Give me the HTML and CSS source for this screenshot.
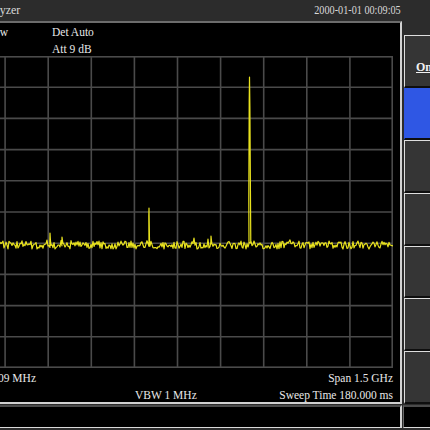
FILE: index.html
```html
<!DOCTYPE html>
<html lang="en">
<head>
  <meta charset="UTF-8">
  <meta name="viewport" content="width=device-width, initial-scale=1.0">
  <title>Spectrum Analyzer</title>
  <link rel="stylesheet" href="styles.css">
</head>
<body>
  <div class="app">
    <!-- left: title bar, screen, status line -->
    <div class="main-col">
      <div class="header">
        <span class="title">Spectrum Analyzer</span>
        <span class="clock">2000-01-01 00:09:05</span>
      </div>

      <div class="display">
        <div class="info">
          <span class="info-left">Input Low</span>
          <span>Det Auto</span>
          <span></span>
          <span>Att 9 dB</span>
        </div>

        <svg class="graticule" viewBox="0 0 431 312" width="431" height="312">
          <g id="grid"></g>
          <polyline id="trace" points=""></polyline>
        </svg>

        <div class="footer">
          <span class="center-freq">Center 750.0009 MHz</span>
          <span class="span-label">Span 1.5 GHz</span>
          <span class="vbw">VBW 1 MHz</span>
          <span class="sweep">Sweep Time 180.000 ms</span>
        </div>
      </div>

      <div class="status-bar"></div>
    </div>

    <!-- right: softkey menu -->
    <div class="softkeys">
      <div class="softkey"><span class="key-label">On/Off</span></div>
      <div class="softkey active"></div>
      <div class="softkey"></div>
      <div class="softkey"></div>
      <div class="softkey"></div>
      <div class="softkey"></div>
      <div class="softkey"></div>
      <div class="status-box"></div>
    </div>
  </div>

  <script src="script.js"></script>
</body>
</html>
```

FILE: styles.css
```css
:root {
  --panel: #2c2c2c;
  --key: #353535;
  --key-active: #2f57e4;
  --edge: #d2d2d2;
  --grid: #4a4a4a;
  --text: #e8e8e8;
}

* {
  box-sizing: border-box;
  margin: 0;
  padding: 0;
}

body {
  width: 430px;
  height: 430px;
  overflow: hidden;
  background: var(--panel);
  color: var(--text);
  font-family: 'Liberation Serif', 'Times New Roman', serif;
}

/* the screen is wider than the window, left side is cut off */
.app {
  display: flex;
  width: 540px;
  height: 430px;
  margin-left: -80px;
}

.main-col {
  display: flex;
  flex-direction: column;
  width: 482px;
  flex-shrink: 0;
}

/* title bar */
.header {
  height: 21px;
  display: flex;
  justify-content: space-between;
  align-items: center;
  padding: 0 1px 0 8px;
  font-size: 12px;
  color: #d9d9d9;
  white-space: nowrap;
}

.clock {
  display: inline-block;
  transform: scaleX(0.85);
  transform-origin: right center;
}

/* screen */
.display {
  height: 383px;
  background: #000;
  border: 2px solid var(--edge);
  border-top-color: #6c6c6c;
}

.info {
  height: 33px;
  padding-top: 1px;
  display: grid;
  grid-template-columns: 86px auto;
  column-gap: 44px;
  font-size: 11.5px;
  line-height: 17px;
  white-space: nowrap;
}

.info-left {
  text-align: right;
}

.graticule {
  display: block;
  margin-left: 40px;
}

#grid line,
#grid rect {
  stroke: var(--grid);
  stroke-width: 1.6;
  fill: none;
}

#trace {
  fill: none;
  stroke: #e8e21e;
  stroke-width: 1.2;
  stroke-linejoin: round;
}

.footer {
  height: 34px;
  padding: 2px 7px 0 0;
  display: grid;
  grid-template-columns: 114px 99px auto 1fr;
  font-size: 11.5px;
  line-height: 16.5px;
  white-space: nowrap;
}

.center-freq {
  grid-row: 1;
  grid-column: 1;
  text-align: right;
}

.span-label {
  grid-row: 1;
  grid-column: 3 / 5;
  text-align: right;
}

.vbw {
  grid-row: 2;
  grid-column: 3;
}

.sweep {
  grid-row: 2;
  grid-column: 4;
  text-align: right;
}

.status-bar {
  height: 23px;
  margin-top: 1px;
  background: #000;
  border-top: 2px solid #4b4b4b;
  border-bottom: 1px solid #dadada;
  border-right: 2px solid var(--edge);
}

/* softkeys */
.softkeys {
  width: 58px;
  flex-shrink: 0;
  padding-top: 35px;
  display: flex;
  flex-direction: column;
}

.softkey {
  height: 52.7px;
  flex-shrink: 0;
  margin-left: 2px;
  padding: 0 0 11px 11px;
  display: flex;
  align-items: flex-end;
  background: var(--key);
  border-top: 1px solid #dedede;
  border-left: 1px solid #dedede;
  border-bottom: 2px solid #0e0e0e;
}

.softkey.active {
  background: var(--key-active);
  border-top-color: var(--key-active);
  border-left-color: var(--key-active);
}

.key-label {
  font-size: 12px;
  font-weight: bold;
  text-decoration: underline;
  white-space: nowrap;
  color: #f2f2f2;
}

.status-box {
  height: 23px;
  flex-shrink: 0;
  margin-top: 1px;
  margin-left: 1px;
  background: #000;
  border-top: 2px solid #4b4b4b;
  border-bottom: 1px solid #dadada;
  border-left: 1px solid #6a6a6a;
}
```

FILE: script.js
```js
// graticule + trace drawing
const NS = 'http://www.w3.org/2000/svg';
const W = 431;
const H = 312;
const FLOOR = 189;

const grid = document.getElementById('grid');
const trace = document.getElementById('trace');

function addLine(x1, y1, x2, y2) {
  const l = document.createElementNS(NS, 'line');
  l.setAttribute('x1', x1);
  l.setAttribute('y1', y1);
  l.setAttribute('x2', x2);
  l.setAttribute('y2', y2);
  grid.appendChild(l);
}

for (let i = 1; i < 10; i++) {
  addLine(W / 10 * i, 0, W / 10 * i, H);
  addLine(0, H / 10 * i, W, H / 10 * i);
}

const border = document.createElementNS(NS, 'rect');
border.setAttribute('x', 0.8);
border.setAttribute('y', 0.8);
border.setAttribute('width', W - 1.6);
border.setAttribute('height', H - 1.6);
grid.appendChild(border);

// fixed seed so the noise is the same every time
let seed = 20240;
function rand() {
  seed = (seed * 16807) % 2147483647;
  return (seed - 1) / 2147483646;
}

const peaks = [
  { x: 88, top: 177 },
  { x: 100, top: 181 },
  { x: 187, top: 152 },
  { x: 249, top: 180 },
  { x: 287.5, top: 21, big: true }
];

const pts = [];
for (let x = 0; x <= W; x += 1) {
  let y = FLOOR + (rand() - 0.5) * 8;
  if (rand() < 0.1) y -= rand() * 4;
  pts.push([x, y]);

  peaks.forEach(p => {
    if (p.x >= x && p.x < x + 1) {
      if (p.big) {
        pts.push([p.x - 0.7, FLOOR - 45]);
        pts.push([p.x - 0.3, p.top + 25]);
        pts.push([p.x, p.top]);
        pts.push([p.x + 0.4, p.top + 30]);
        pts.push([p.x + 0.9, FLOOR - 60]);
        pts.push([p.x + 1.3, FLOOR - 2]);
      } else {
        pts.push([p.x - 0.2, p.top + 8]);
        pts.push([p.x, p.top]);
        pts.push([p.x + 0.5, FLOOR - 4]);
      }
    }
  });
}

trace.setAttribute('points', pts.map(p => p[0].toFixed(1) + ',' + p[1].toFixed(1)).join(' '));
```
